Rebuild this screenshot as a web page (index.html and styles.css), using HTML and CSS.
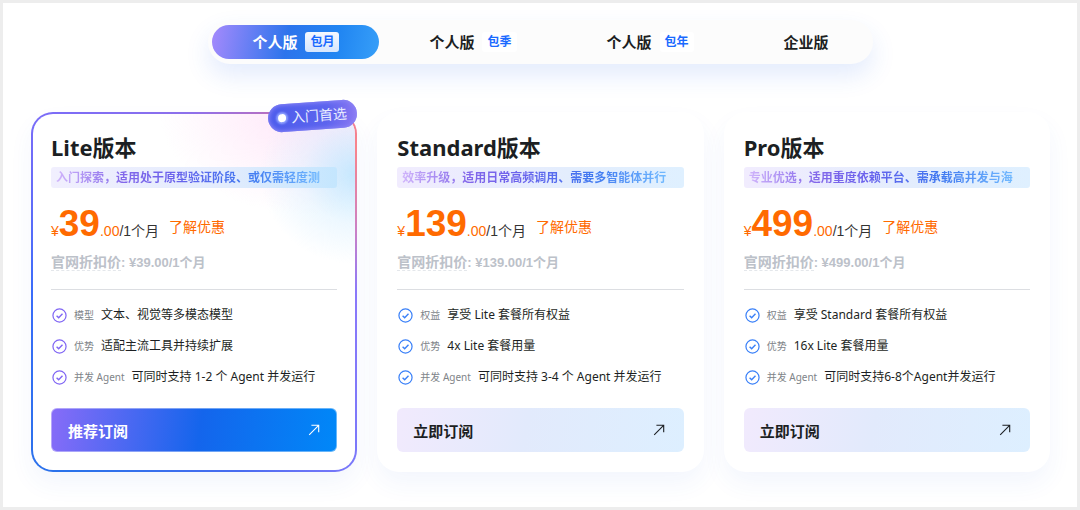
FILE: index.html
```
<!DOCTYPE html>
<html lang="zh-CN">
<head>
  <meta charset="UTF-8">
  <meta name="viewport" content="width=device-width, initial-scale=1.0">
  <title>套餐订阅</title>
  <link rel="stylesheet" href="styles.css">
</head>
<body>
  <!-- Shared icons -->
  <svg class="sprite" aria-hidden="true">
    <symbol id="icon-check" viewBox="0 0 16 16">
      <circle cx="8" cy="8" r="7" fill="none" stroke="currentColor" stroke-width="1.3"/>
      <path d="M4.9 8.2l2.2 2.1 4.1-4.2" fill="none" stroke="currentColor" stroke-width="1.5"/>
    </symbol>
    <symbol id="icon-arrow" viewBox="0 0 12 12">
      <path d="M1.2 10.8L10.6 1.4M3.4 1.3h7.3v7" fill="none" stroke="currentColor" stroke-width="1.1"/>
    </symbol>
  </svg>

  <main class="page">
    <!-- Tabs -->
    <nav class="tabs">
      <button class="tab active" type="button">个人版<span class="tab-badge">包月</span></button>
      <button class="tab" type="button">个人版<span class="tab-badge">包季</span></button>
      <button class="tab" type="button">个人版<span class="tab-badge">包年</span></button>
      <button class="tab" type="button">企业版</button>
    </nav>

    <!-- Plans -->
    <section class="plans">
      <article class="card featured">
        <div class="ribbon"><span class="ribbon-dot"></span>入门首选</div>
        <h2>Lite版本</h2>
        <p class="desc"><span>入门探索，适用处于原型验证阶段、或仅需轻度测</span></p>
        <div class="price">
          <p><span class="money">¥<strong>39</strong>.00</span>/1个月</p>
          <a href="#offer">了解优惠</a>
        </div>
        <p class="discount"><span class="hint">官网折扣价</span>: ¥39.00/1个月</p>
        <ul class="features">
          <li><svg class="check"><use href="#icon-check"/></svg><span class="label">模型</span>文本、视觉等多模态模型</li>
          <li><svg class="check"><use href="#icon-check"/></svg><span class="label">优势</span>适配主流工具并持续扩展</li>
          <li><svg class="check"><use href="#icon-check"/></svg><span class="label">并发 Agent</span>可同时支持 1-2 个 Agent 并发运行</li>
        </ul>
        <button class="subscribe" type="button">推荐订阅<svg class="arrow"><use href="#icon-arrow"/></svg></button>
      </article>

      <article class="card">
        <h2>Standard版本</h2>
        <p class="desc"><span>效率升级，适用日常高频调用、需要多智能体并行</span></p>
        <div class="price">
          <p><span class="money">¥<strong>139</strong>.00</span>/1个月</p>
          <a href="#offer">了解优惠</a>
        </div>
        <p class="discount"><span class="hint">官网折扣价</span>: ¥139.00/1个月</p>
        <ul class="features">
          <li><svg class="check"><use href="#icon-check"/></svg><span class="label">权益</span>享受 Lite 套餐所有权益</li>
          <li><svg class="check"><use href="#icon-check"/></svg><span class="label">优势</span>4x Lite 套餐用量</li>
          <li><svg class="check"><use href="#icon-check"/></svg><span class="label">并发 Agent</span>可同时支持 3-4 个 Agent 并发运行</li>
        </ul>
        <button class="subscribe" type="button">立即订阅<svg class="arrow"><use href="#icon-arrow"/></svg></button>
      </article>

      <article class="card">
        <h2>Pro版本</h2>
        <p class="desc"><span>专业优选，适用重度依赖平台、需承载高并发与海</span></p>
        <div class="price">
          <p><span class="money">¥<strong>499</strong>.00</span>/1个月</p>
          <a href="#offer">了解优惠</a>
        </div>
        <p class="discount"><span class="hint">官网折扣价</span>: ¥499.00/1个月</p>
        <ul class="features">
          <li><svg class="check"><use href="#icon-check"/></svg><span class="label">权益</span>享受 Standard 套餐所有权益</li>
          <li><svg class="check"><use href="#icon-check"/></svg><span class="label">优势</span>16x Lite 套餐用量</li>
          <li><svg class="check"><use href="#icon-check"/></svg><span class="label">并发 Agent</span>可同时支持6-8个Agent并发运行</li>
        </ul>
        <button class="subscribe" type="button">立即订阅<svg class="arrow"><use href="#icon-arrow"/></svg></button>
      </article>
    </section>
  </main>
</body>
</html>
```
FILE: styles.css
```
/* Basic Styles */
* {
  box-sizing: border-box;
}

body {
  margin: 0;
  font-family: "Noto Sans", "Noto Sans CJK SC", sans-serif;
  font-size: 12px;
  color: #1c1f23;
  background-color: #fff;
}

h2,
p,
ul {
  margin: 0;
  padding: 0;
}

button {
  border: none;
  font-family: inherit;
  cursor: pointer;
}

.sprite {
  display: none;
}

.page {
  min-height: 100vh;
  padding: 17px 27px 34px 28px;
  border: 3px solid #ededed;
}

/* Tabs */
.tabs {
  display: flex;
  gap: 10px;
  width: fit-content;
  margin: 0 auto 48px;
  padding: 5px 4px;
  border-radius: 22px;
  background-color: #fcfcfc;
  box-shadow: 0 12px 24px rgba(50, 110, 240, 0.13);
}

.tab {
  display: flex;
  align-items: center;
  gap: 8px;
  height: 34px;
  padding: 0 40px 1px;
  border-radius: 17px;
  background: none;
  color: #1c1f23;
  font-size: 15px;
  font-weight: 700;
}

.tab.active {
  color: #fff;
  background: linear-gradient(100deg, #a58afc 0%, #2d74ec 45%, #2186f2 75%, #379ff8 100%);
}

.tab-badge {
  padding: 0 5px;
  border-radius: 3px;
  background-color: #fff;
  color: #1a6aff;
  font-size: 12px;
  font-weight: 700;
  line-height: 20px;
}

.tab.active .tab-badge {
  background: linear-gradient(#f4f8ff, #d6e6fd);
}

/* Cards */
.plans {
  display: grid;
  grid-template-columns: repeat(3, 1fr);
  gap: 20px;
}

.card {
  position: relative;
  padding: 18px;
  border: 2px solid transparent;
  border-radius: 22px;
  background-color: #fff;
  box-shadow: 0 12px 24px rgba(50, 100, 220, 0.06);
}

.card.featured {
  background:
    radial-gradient(95px 90px at 100% 60px, rgba(184, 228, 255, 0.8), rgba(205, 235, 255, 0.35) 55%, rgba(220, 240, 255, 0)) padding-box,
    radial-gradient(150px 100px at 86% 0, rgba(255, 222, 246, 0.75), rgba(255, 235, 251, 0)) padding-box,
    linear-gradient(#fff, #fff) padding-box,
    conic-gradient(#8f70ea 0deg, #b070c8 20deg, #e8789c 36deg, #f8848c 48deg, #c880c8 70deg, #8a78fa 90deg, #7a78fa 138deg, #4a6cf0 165deg, #2a72ea 215deg, #3a6cfa 270deg, #7a6cf8 318deg, #8f70ea 360deg) border-box;
}

.ribbon {
  position: absolute;
  top: -12px;
  right: -2px;
  display: flex;
  align-items: center;
  gap: 5px;
  padding: 0 10px;
  border-radius: 14px;
  background: linear-gradient(95deg, #4c5cec 0%, #5c64ee 65%, #8c78f2 100%);
  box-shadow: inset 0 0 4px 1px #8c86f6;
  color: #e8ecff;
  font-size: 14px;
  line-height: 28px;
  transform: rotate(-4deg);
}

.ribbon-dot {
  width: 8px;
  height: 8px;
  border-radius: 50%;
  background-color: #fff;
  box-shadow: 0 0 2px 2px #8ea0ff;
}

h2 {
  font-size: 22px;
  line-height: 30px;
  font-weight: 700;
}

.desc {
  margin-top: 5px;
  padding: 1px 5px 0;
  border-radius: 3px;
  background: linear-gradient(90deg, #f1ecfe, #e3edfd 60%, #dff0ff);
  line-height: 20px;
  font-weight: 700;
  white-space: nowrap;
  overflow: hidden;
}

.featured .desc {
  background: linear-gradient(90deg, #f1effe, #e3ecfd 60%, #c4e6fe);
}

.desc span {
  background: linear-gradient(90deg, #d0b4fb 0%, #8468ea 25%, #6a62ec 45%, #4078f0 72%, #72baff 100%);
  background-clip: text;
  -webkit-background-clip: text;
  color: transparent;
}

/* Price */
.price {
  display: flex;
  align-items: center;
  gap: 10px;
  margin-top: 18px;
  height: 42px;
  font-family: "Liberation Sans", "Noto Sans CJK SC", sans-serif;
  font-size: 14px;
  line-height: 42px;
  color: #333;
}

.money {
  color: #ff6a00;
}

.money strong {
  font-size: 37px;
}

.price a {
  color: #ff6a00;
  text-decoration: none;
}

.discount {
  margin-top: 4px;
  padding-bottom: 16px;
  border-bottom: 1px solid #dcdee2;
  font-family: "Liberation Sans", "Noto Sans CJK SC", sans-serif;
  font-size: 13px;
  font-weight: 700;
  line-height: 20px;
  color: #bcc1c9;
}

.hint {
  border-bottom: 1px dashed #e4e7eb;
  font-size: 14px;
}

/* Features */
.features {
  display: grid;
  gap: 11px;
  padding: 15px 1px 21px;
  list-style: none;
}

.features li {
  display: flex;
  align-items: center;
  gap: 7px;
  line-height: 20px;
  white-space: nowrap;
}

.check {
  width: 15px;
  height: 15px;
  color: #3a80f8;
}

.featured .check {
  color: #8066f4;
}

.label {
  color: #808489;
  font-size: 10px;
}

/* Subscribe button */
.subscribe {
  display: flex;
  align-items: center;
  justify-content: space-between;
  width: 100%;
  height: 44px;
  padding: 0 19px 0 16px;
  border-radius: 6px;
  background: linear-gradient(100deg, #f1eafd 0%, #e2eafc 45%, #ddefff 100%);
  color: #1c1f23;
  font-size: 15px;
  font-weight: 700;
}

.featured .subscribe {
  padding-right: 16px;
  border: 1px solid rgba(255, 255, 255, 0.4);
  background: linear-gradient(98deg, #886cf8 0%, #1465ec 52%, #0088f8 100%) border-box;
  color: #fff;
}

.arrow {
  width: 12px;
  height: 12px;
}
```
